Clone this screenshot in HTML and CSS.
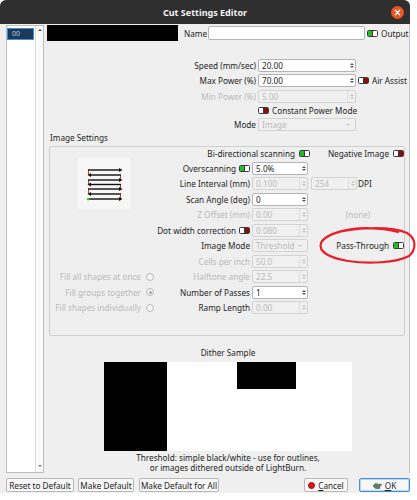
FILE: index.html
```html
<!DOCTYPE html>
<html>
<head>
<meta charset="utf-8">
<link rel="stylesheet" href="styles.css">
</head>
<body>
<div class="window">
  <div class="titlebar">
    <span></span>
    <span class="title">Cut Settings Editor</span>
    <span class="close"><svg width="13" height="13" viewBox="0 0 13 13"><circle cx="6.5" cy="6.5" r="6.5" fill="#e95420"/><path d="M4.3 4.3 L8.7 8.7 M8.7 4.3 L4.3 8.7" stroke="#fff" stroke-width="1.3" stroke-linecap="round"/></svg></span>
  </div>
  <div class="main">
    <div class="layerlist">
      <div class="items"><div class="item">00</div></div>
      <div class="vscroll"><i class="sarr-up"></i><i class="sarr-dn"></i></div>
    </div>
    <div class="panel">
      <div class="namerow">
        <div class="redact"></div>
        <span class="lbl-name">Name</span>
        <div class="fld name-input"></div>
        <svg class="tg" width="11" height="7" viewBox="0 0 11 7"><rect x="0.5" y="0.5" width="10" height="6" rx="1" fill="#fff" stroke="#3a3a3a"/><rect x="1" y="1" width="4.5" height="5" fill="#22c022"/><line x1="5.5" y1="1" x2="5.5" y2="6" stroke="#3a3a3a"/></svg>
        <span class="after-tg">Output</span>
      </div>

      <div class="topform">
        <span class="lbl">Speed (mm/sec)</span>
        <div class="fld"><span>20.00</span><span class="sp"><i class="up"></i><i class="dn"></i></span></div>
        <span></span>

        <span class="lbl">Max Power (%)</span>
        <div class="fld"><span>70.00</span><span class="sp"><i class="up"></i><i class="dn"></i></span></div>
        <span class="extra"><svg class="tg" width="11" height="7" viewBox="0 0 11 7"><rect x="0.5" y="0.5" width="10" height="6" rx="1" fill="#fff" stroke="#3a3a3a"/><rect x="5.5" y="1" width="4.5" height="5" fill="#8e0b0b"/><line x1="5.5" y1="1" x2="5.5" y2="6" stroke="#3a3a3a"/></svg><span class="after-tg">Air Assist</span></span>

        <span class="lbl dis-t">Min Power (%)</span>
        <div class="fld dis"><span>5.00</span><span class="sp"><i class="up"></i><i class="dn"></i></span></div>
        <span></span>

        <span></span>
        <span class="cpm"><svg class="tg" width="11" height="7" viewBox="0 0 11 7"><rect x="0.5" y="0.5" width="10" height="6" rx="1" fill="#fff" stroke="#3a3a3a"/><rect x="5.5" y="1" width="4.5" height="5" fill="#8e0b0b"/><line x1="5.5" y1="1" x2="5.5" y2="6" stroke="#3a3a3a"/></svg><span class="after-tg">Constant Power Mode</span></span>

        <span class="lbl">Mode</span>
        <div class="fld dis combo"><span>Image</span><i class="dd"></i></div>
        <span></span>
      </div>

      <div class="grouptitle">Image Settings</div>
      <div class="group">
        <div class="scanicon">
          <svg width="52" height="51" viewBox="0 0 52 51">
            <rect width="52" height="51" fill="#f6f6f6"/>
            <g stroke="#e03030" stroke-width="1">
              <line x1="10.5" y1="12" x2="10.5" y2="17"/>
              <line x1="42.5" y1="17" x2="42.5" y2="22"/>
              <line x1="10.5" y1="22" x2="10.5" y2="26.5"/>
              <line x1="42.5" y1="26.5" x2="42.5" y2="31"/>
              <line x1="10.5" y1="31" x2="10.5" y2="36"/>
              <line x1="42.5" y1="36" x2="42.5" y2="41"/>
            </g>
            <g stroke="#111" stroke-width="1.4">
              <line x1="10" y1="12" x2="42" y2="12"/>
              <line x1="12" y1="17" x2="43" y2="17"/>
              <line x1="10" y1="22" x2="42" y2="22"/>
              <line x1="12" y1="26.5" x2="43" y2="26.5"/>
              <line x1="10" y1="31" x2="42" y2="31"/>
              <line x1="12" y1="36" x2="43" y2="36"/>
              <line x1="10" y1="41" x2="42" y2="41"/>
            </g>
            <g fill="#111">
              <path d="M41 10 L44.5 12 L41 14 Z"/>
              <path d="M13 15 L9.5 17 L13 19 Z"/>
              <path d="M41 20 L44.5 22 L41 24 Z"/>
              <path d="M13 24.5 L9.5 26.5 L13 28.5 Z"/>
              <path d="M41 29 L44.5 31 L41 33 Z"/>
              <path d="M13 34 L9.5 36 L13 38 Z"/>
              <path d="M41 39 L44.5 41 L41 43 Z"/>
            </g>
            <rect x="9" y="40" width="2.2" height="2.2" fill="#18d818"/>
          </svg>
        </div>

        <span class="bidir">Bi-directional scanning <svg class="tg" width="11" height="7" viewBox="0 0 11 7"><rect x="0.5" y="0.5" width="10" height="6" rx="1" fill="#fff" stroke="#3a3a3a"/><rect x="1" y="1" width="4.5" height="5" fill="#22c022"/><line x1="5.5" y1="1" x2="5.5" y2="6" stroke="#3a3a3a"/></svg></span>
        <span class="c4 right r1">Negative Image <svg class="tg" width="11" height="7" viewBox="0 0 11 7"><rect x="0.5" y="0.5" width="10" height="6" rx="1" fill="#fff" stroke="#3a3a3a"/><rect x="5.5" y="1" width="4.5" height="5" fill="#8e0b0b"/><line x1="5.5" y1="1" x2="5.5" y2="6" stroke="#3a3a3a"/></svg></span>

        <span class="c2 r2">Overscanning <svg class="tg" width="11" height="7" viewBox="0 0 11 7"><rect x="0.5" y="0.5" width="10" height="6" rx="1" fill="#fff" stroke="#3a3a3a"/><rect x="1" y="1" width="4.5" height="5" fill="#22c022"/><line x1="5.5" y1="1" x2="5.5" y2="6" stroke="#3a3a3a"/></svg></span>
        <div class="fld c3 r2"><span>5.0%</span><span class="sp"><i class="up"></i><i class="dn"></i></span></div>

        <span class="c2 r3">Line Interval (mm)</span>
        <div class="fld dis c3 r3"><span>0.100</span><span class="sp"><i class="up"></i><i class="dn"></i></span></div>
        <span class="c4 r3 dpi"><span class="fld dis dpifld"><span>254</span><span class="sp"><i class="up"></i><i class="dn"></i></span></span><span>DPI</span></span>

        <span class="c2 r4">Scan Angle (deg)</span>
        <div class="fld c3 r4"><span>0</span><span class="sp"><i class="up"></i><i class="dn"></i></span></div>

        <span class="c2 r5 dis-t">Z Offset (mm)</span>
        <div class="fld dis c3 r5"><span>0.00</span><span class="sp"><i class="up"></i><i class="dn"></i></span></div>
        <span class="c4 r5 none dis-t">(none)</span>

        <span class="c2 r6">Dot width correction <svg class="tg" width="11" height="7" viewBox="0 0 11 7"><rect x="0.5" y="0.5" width="10" height="6" rx="1" fill="#fff" stroke="#3a3a3a"/><rect x="5.5" y="1" width="4.5" height="5" fill="#8e0b0b"/><line x1="5.5" y1="1" x2="5.5" y2="6" stroke="#3a3a3a"/></svg></span>
        <div class="fld dis c3 r6"><span>0.080</span><span class="sp"><i class="up"></i><i class="dn"></i></span></div>

        <span class="c2 r7">Image Mode</span>
        <div class="fld dis combo c3 r7"><span>Threshold</span><i class="dd"></i></div>
        <span class="c4 right r7 pt">Pass-Through <svg class="tg" width="11" height="7" viewBox="0 0 11 7"><rect x="0.5" y="0.5" width="10" height="6" rx="1" fill="#fff" stroke="#3a3a3a"/><rect x="1" y="1" width="4.5" height="5" fill="#22c022"/><line x1="5.5" y1="1" x2="5.5" y2="6" stroke="#3a3a3a"/></svg></span>

        <span class="c2 r8 dis-t">Cells per inch</span>
        <div class="fld dis c3 r8"><span>50.0</span><span class="sp"><i class="up"></i><i class="dn"></i></span></div>

        <span class="c1 r9 radio">Fill all shapes at once <i class="rb"></i></span>
        <span class="c2 r9 dis-t">Halftone angle</span>
        <div class="fld dis c3 r9"><span>22.5</span><span class="sp"><i class="up"></i><i class="dn"></i></span></div>

        <span class="c1 r10 radio">Fill groups together <i class="rb on"></i></span>
        <span class="c2 r10">Number of Passes</span>
        <div class="fld c3 r10"><span>1</span><span class="sp"><i class="up"></i><i class="dn"></i></span></div>

        <span class="c1 r11 radio">Fill shapes individually <i class="rb"></i></span>
        <span class="c2 r11">Ramp Length</span>
        <div class="fld dis c3 r11"><span>0.00</span><span class="sp"><i class="up"></i><i class="dn"></i></span></div>
      </div>

      <div class="dither-title">Dither Sample</div>
      <div class="dither-img">
        <div class="blk-left"></div>
        <div class="blk-top"></div>
      </div>
      <div class="caption">Threshold: simple black/white - use for outlines,<br>or images dithered outside of LightBurn.</div>
    </div>
  </div>
  <div class="buttons">
    <span class="btn b-reset">Reset to Default</span>
    <span class="btn b-make">Make Default</span>
    <span class="btn b-all">Make Default for All</span>
    <span class="btn b-cancel"><i class="cancel-ic"></i><span><u>C</u>ancel</span></span>
    <span class="btn b-ok"><svg class="ok-ic" width="9" height="7" viewBox="0 0 9 7"><path d="M0.5 3.2 L3 1.2 L4.2 2.2 L8.3 2.2 L8.3 3.6 L6.8 3.6 L6.8 6.5 L2.6 6.5 L0.5 4.6 Z" fill="#5f7f5f" stroke="#3f5a3f" stroke-width="0.6"/></svg><span><u>O</u>K</span></span>
  </div>
  <svg class="annot" width="417" height="493" viewBox="0 0 417 493">
    <path d="M333 234 C352 227 392 226 407 233 C416 238 417 249 409 256 C396 263 368 264 348 261 C330 258 318 252 321 243 C324 236 338 231 352 229 C368 227 388 229 398 232" fill="none" stroke="#e8202a" stroke-width="2.2" stroke-linecap="round"/>
  </svg>
</div>
</body>
</html>
```
FILE: styles.css
```css
body {
  margin: 0;
  background: #ffffff;
  font-family: "Noto Sans", "DejaVu Sans", sans-serif;
  font-size: 8.2px;
  color: #1e1e1e;
}
.window {
  position: relative;
  width: 410px;
  height: 493px;
  background: #efefef;
  border-radius: 6px 6px 0 0;
}
.titlebar {
  height: 24px;
  background: #2f2f2f;
  border-radius: 6px 6px 0 0;
  display: grid;
  grid-template-columns: 1fr auto 1fr;
  align-items: center;
}
.title {
  color: #f3f3f3;
  font-weight: bold;
  font-size: 9px;
}
.close {
  justify-self: end;
  margin-right: 6px;
  height: 13px;
}
.close svg { display: block; }
.main {
  display: flex;
  height: 449px;
}
.layerlist {
  margin: 1px 0 0 6px;
  width: 36px;
  height: 446px;
  border: 1px solid #bdbdbd;
  background: #ffffff;
  display: flex;
}
.items {
  flex: 1;
  padding: 1px 0 0 0;
}
.item {
  height: 12px;
  box-sizing: border-box;
  margin-top: 1px;
  margin-right: 1px;
  background: #1b3a58;
  border: 1px solid #3f8fd6;
  color: #b9cde0;
  font-size: 7px;
  line-height: 10px;
  padding-left: 4px;
}
.vscroll {
  width: 7px;
  border-left: 1px solid #dcdcdc;
  background: #fafafa;
  display: flex;
  flex-direction: column;
  justify-content: space-between;
  align-items: center;
  padding: 3px 0 5px;
}
.sarr-up, .sarr-dn {
  width: 0;
  height: 0;
  border-left: 2px solid transparent;
  border-right: 2px solid transparent;
}
.sarr-up { border-bottom: 2px solid #444; }
.sarr-dn { border-top: 2px solid #777; }
.panel {
  flex: 1;
  display: flex;
  flex-direction: column;
  border-right: 1px solid #c6c6c6;
  padding-top: 1px;
}
.namerow {
  display: flex;
  align-items: center;
  height: 16px;
}
.redact {
  width: 131px;
  height: 16px;
  background: #000;
  margin-left: 3px;
}
.lbl-name {
  width: 22px;
  margin-left: 6px;
  text-align: right;
}
.name-input {
  margin-left: 2px;
  width: 157px;
  height: 14px !important;
}
.tg {
  display: inline-block;
  vertical-align: middle;
  flex: none;
}
.namerow .tg { margin-left: 2px; }
.after-tg { margin-left: 3px; }

.fld {
  height: 13px;
  box-sizing: border-box;
  border: 1px solid #b4b4b4;
  border-radius: 2px;
  background: #ffffff;
  display: flex;
  align-items: center;
  padding-left: 3px;
  color: #1e1e1e;
  line-height: 11px;
}
.fld.dis {
  background: #f0f0f0;
  border-color: #d3d3d3;
  color: #bcbcbc;
}
.sp {
  margin-left: auto;
  width: 7px;
  height: 100%;
  display: flex;
  flex-direction: column;
  justify-content: center;
  align-items: center;
  gap: 1px;
}
.dis .sp { border-left: 1px solid #dedede; }
.up, .dn {
  width: 0;
  height: 0;
  border-left: 2px solid transparent;
  border-right: 2px solid transparent;
}
.up { border-bottom: 2px solid #555; }
.dn { border-top: 2px solid #555; }
.dis .up { border-bottom-color: #c6c6c6; }
.dis .dn { border-top-color: #c6c6c6; }
.combo .dd {
  margin-left: auto;
  margin-right: 5px;
  width: 0;
  height: 0;
  border-left: 2.5px solid transparent;
  border-right: 2.5px solid transparent;
  border-top: 2.5px solid #c4c4c4;
}

.topform {
  display: grid;
  grid-template-columns: 214px 98px 1fr;
  grid-template-rows: 15.5px 15.5px 15.5px 13px 15.5px;
  align-items: center;
  margin-top: 16.25px;
}
.topform .lbl {
  justify-self: end;
  padding-right: 2px;
}
.dis-t { color: #bbbbbb; }
.extra {
  display: flex;
  align-items: center;
  margin-left: 2px;
  white-space: nowrap;
}
.cpm {
  grid-column: 2 / 4;
  display: flex;
  align-items: center;
}

.grouptitle {
  margin: 1px 0 3px 6px;
  height: 10px;
  line-height: 10px;
}
.group {
  margin-left: 5px;
  width: 356px;
  height: 190px;
  box-sizing: border-box;
  border: 1px solid #cfcfcf;
  border-radius: 2px;
  display: grid;
  grid-template-columns: 107px 91px 56px 1fr;
  column-gap: 2px;
  grid-template-rows: 13px repeat(10, 15.5px);
  align-items: center;
  align-content: start;
}
.group > span { white-space: nowrap; }
.c1 { grid-column: 1; justify-self: end; }
.c2 { grid-column: 2; justify-self: end; display: flex; align-items: center; gap: 3px; }
.c3 { grid-column: 3; }
.c4 { grid-column: 4; }
.right { justify-self: end; display: flex; align-items: center; gap: 4px; }
.r1 { grid-row: 1; }
.r2 { grid-row: 2; }
.r3 { grid-row: 3; }
.r4 { grid-row: 4; }
.r5 { grid-row: 5; }
.r6 { grid-row: 6; }
.r7 { grid-row: 7; }
.r8 { grid-row: 8; }
.r9 { grid-row: 9; }
.r10 { grid-row: 10; }
.r11 { grid-row: 11; }
.scanicon {
  grid-column: 1;
  grid-row: 1 / 5;
  justify-self: center;
  align-self: start;
  margin-top: 11px;
  height: 51px;
}
.scanicon svg { display: block; }
.bidir {
  grid-column: 2 / 4;
  grid-row: 1;
  justify-self: end;
  margin-right: -2px;
  display: flex;
  align-items: center;
  gap: 4px;
}
.dpi {
  display: flex;
  align-items: center;
  gap: 1px;
}
.dpifld {
  width: 46px;
  margin-left: 1px;
}
.none { justify-self: center; padding-left: 2px; }
.pt { margin-right: 0; }
.radio {
  display: flex;
  align-items: center;
  gap: 5px;
  padding-right: 3px;
  color: #bbbbbb;
}
.rb {
  width: 8px;
  height: 8px;
  box-sizing: border-box;
  border: 1px solid #b9b9b9;
  border-radius: 50%;
  background: #f6f6f6;
  display: flex;
  align-items: center;
  justify-content: center;
}
.rb.on::after {
  content: "";
  width: 3px;
  height: 3px;
  border-radius: 50%;
  background: #a8a8a8;
}

.dither-title {
  margin-top: 12px;
  height: 10px;
  line-height: 10px;
  text-align: center;
  padding-left: 3px;
}
.dither-img {
  margin: 4px 0 0 60px;
  width: 248px;
  height: 89px;
  background: #ffffff;
  display: flex;
  align-items: flex-start;
}
.blk-left {
  width: 63px;
  height: 89px;
  background: #000;
}
.blk-top {
  margin-left: 70px;
  width: 59px;
  height: 27px;
  background: #000;
}
.caption {
  margin-top: 2px;
  text-align: center;
  line-height: 10px;
  padding-left: 3px;
}

.buttons {
  display: flex;
  align-items: center;
  height: 14px;
  margin-top: 5px;
  padding-left: 6px;
}
.btn {
  height: 14px;
  box-sizing: border-box;
  border: 1px solid #b9b9b9;
  border-radius: 2px;
  background: #f7f7f7;
  display: flex;
  align-items: center;
  justify-content: center;
  gap: 3px;
  white-space: nowrap;
  color: #1e1e1e;
}
.b-reset { width: 68px; }
.b-make { width: 56px; margin-left: 4px; }
.b-all { width: 80px; margin-left: 5px; }
.b-cancel { width: 44px; margin-left: auto; }
.b-ok {
  width: 51px;
  margin-left: 11px;
  border-color: #4d8fd6;
  box-shadow: inset 0 0 0 1px #b9d5f2;
}
.cancel-ic {
  width: 7px;
  height: 7px;
  box-sizing: border-box;
  border-radius: 50%;
  background: #e1141a;
  border: 1px solid #9a0d10;
}
.ok-ic { display: block; }
u { text-decoration: underline; }
.annot {
  position: absolute;
  left: 0;
  top: 0;
  pointer-events: none;
  overflow: visible;
}
```
